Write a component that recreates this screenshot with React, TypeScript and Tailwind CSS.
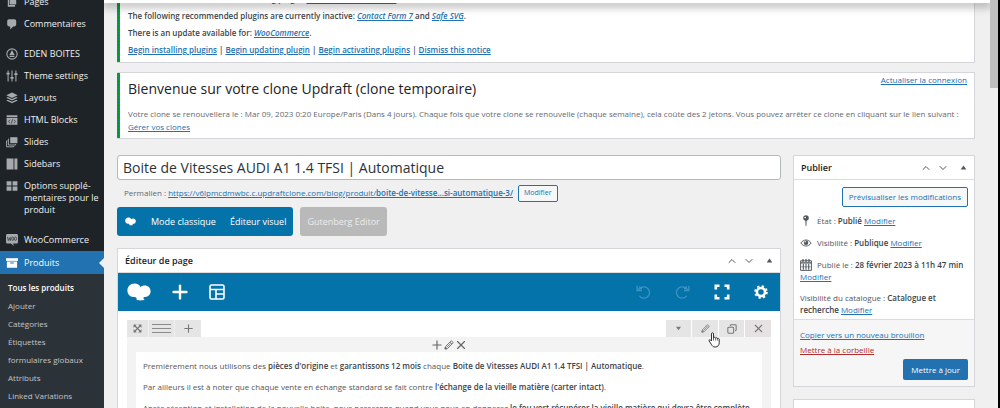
import React from 'react';
import { ChevronDown, ChevronUp, X, Plus, Copy } from 'lucide-react';

interface IconProps {
  className?: string;
}

const CommentIcon: React.FC<IconProps> = ({ className }) => (
  <svg viewBox="0 0 20 20" fill="currentColor" className={className}>
    <path d="M5 2h9a3 3 0 0 1 3 3v6a3 3 0 0 1-3 3h-2l-5 5v-5H5a3 3 0 0 1-3-3V5a3 3 0 0 1 3-3z" />
  </svg>
);

const PagesIcon: React.FC<IconProps> = ({ className }) => (
  <svg viewBox="0 0 20 20" fill="currentColor" className={className}>
    <path d="M6 1h11v13H6zM3 4h2v11h10v3H3z" />
  </svg>
);

const EdenIcon: React.FC<IconProps> = ({ className }) => (
  <svg viewBox="0 0 20 20" className={className}>
    <circle cx="10" cy="10" r="8.6" fill="none" stroke="currentColor" strokeWidth="1.8" />
    <path d="M10 3.5l4.6 8.4H5.4zM6 13.4h8v1.6H6z" fill="currentColor" />
  </svg>
);

const SlidersIcon: React.FC<IconProps> = ({ className }) => (
  <svg viewBox="0 0 20 20" fill="none" stroke="currentColor" strokeWidth="1.8" className={className}>
    <path d="M3.5 1v18M10 1v18M16.5 1v18" />
    <path d="M.8 6h5.4M7.3 13h5.4M13.8 7h5.4" strokeWidth="3" />
  </svg>
);

const LayersIcon: React.FC<IconProps> = ({ className }) => (
  <svg viewBox="0 0 20 20" fill="currentColor" className={className}>
    <path d="M10 1l9.5 4.5L10 10 .5 5.5z" />
    <path d="M3 8.2l7 3.4 7-3.4 2.5 1.3L10 14 .5 9.5zM3 12.8l7 3.4 7-3.4 2.5 1.3L10 18.7.5 14.1z" />
  </svg>
);

const CodeIcon: React.FC<IconProps> = ({ className }) => (
  <svg viewBox="0 0 20 20" className={className}>
    <path d="M1 2h18v3.5H1zM1 6.8h18V18H1z" fill="currentColor" />
    <path d="M7 9.5l-3 3 3 3M13 9.5l3 3-3 3M11 9l-2 7" fill="none" stroke="#1d2327" strokeWidth="1.2" />
  </svg>
);

const SlidesIcon: React.FC<IconProps> = ({ className }) => (
  <svg viewBox="0 0 20 20" className={className}>
    <path d="M7 2h12v10H7z" fill="currentColor" />
    <path d="M5 5H4v10h12v-1.5M2.5 8H1v10h12v-1.5" fill="none" stroke="currentColor" strokeWidth="1.6" />
  </svg>
);

const SidebarsIcon: React.FC<IconProps> = ({ className }) => (
  <svg viewBox="0 0 20 20" fill="currentColor" className={className}>
    <path d="M1 1h11.5v18H1zM14 1h5v18h-5z" />
  </svg>
);

const GridIcon: React.FC<IconProps> = ({ className }) => (
  <svg viewBox="0 0 20 20" fill="currentColor" className={className}>
    <path d="M1 2h8v7H1zM11 2h8v7h-8zM1 11h8v7H1zM11 11h8v7h-8z" />
  </svg>
);

const WooIcon: React.FC<IconProps> = ({ className }) => (
  <svg viewBox="0 1 24 19" preserveAspectRatio="none" className={className}>
    <path d="M2.5 1h19A2.5 2.5 0 0 1 24 3.5v10a2.500 2.500 0 0 1-2.500 2.500H14l2 4-6-4H2.500A2.500 2.500 0 0 1 0 13.500v-10A2.500 2.500 0 0 1 2.500 1z" fill="currentColor" />
    <path d="M3 5.500l1.500 6L7 7l1.500 4.500L10 5.500" fill="none" stroke="#3c434a" strokeWidth="1.500" />
    <ellipse cx="13.500" cy="8.500" rx="2" ry="2.800" fill="none" stroke="#3c434a" strokeWidth="1.500" />
    <ellipse cx="19" cy="8.500" rx="2" ry="2.800" fill="none" stroke="#3c434a" strokeWidth="1.500" />
  </svg>
);

const ArchiveIcon: React.FC<IconProps> = ({ className }) => (
  <svg viewBox="0 0 20 20" fill="currentColor" className={className}>
    <path d="M0 2h20v4.500H0z" />
    <path fillRule="evenodd" d="M1.500 7.500h17V18h-17zM7 9v2h6V9z" />
  </svg>
);

const BakeryLogo: React.FC<IconProps> = ({ className }) => (
  <svg viewBox="0 0 24 18" fill="currentColor" className={className}>
    <path d="M7.500.5c3 0 5 1.400 6 3.600 1.200-1 2.600-1.500 4.200-1.500 3.500 0 5.900 2.400 5.900 5.600 0 3.100-2.400 5.600-5.400 5.700-.6 0-1 .1-1.400.4-.7.600-.5 1.600.9 2.500-2.200.8-6.700.9-8.300 0 .5-.8.3-1.700-.4-2.300-.8-.5-1.700-.3-2.600-.4C2.800 13.800.4 11 .4 7.500.4 3.500 3.500.5 7.500.5z" />
  </svg>
);

const LayoutIcon: React.FC<IconProps> = ({ className }) => (
  <svg viewBox="0 0 16 16" fill="none" stroke="currentColor" strokeWidth="1.6" className={className}>
    <rect x="1" y="1" width="14" height="14" rx="1.5" />
    <path d="M1 5.5h14M7 5.5V15M7 10h8" />
  </svg>
);

const PencilIcon: React.FC<IconProps> = ({ className }) => (
  <svg viewBox="0 0 20 20" className={className}>
    <path d="M2 18l1-5L13.5 2.5a1.8 1.8 0 0 1 2.6 0l1.4 1.4a1.8 1.8 0 0 1 0 2.6L7 17z" fill="none" stroke="currentColor" strokeWidth="1.8" />
    <path d="M12 4l4 4M5 15l8-8M2 18l.6-3 2.4 2.4z" fill="currentColor" stroke="currentColor" strokeWidth="1.6" />
  </svg>
);

const UndoIcon: React.FC<IconProps> = ({ className }) => (
  <svg viewBox="0 0 20 20" fill="none" stroke="currentColor" strokeWidth="1.8" className={className}>
    <path d="M3 6.500C5 3.800 7.500 2.500 10.500 2.500a7.500 7.500 0 1 1-6 12" />
    <path d="M1.500 1v6.500H8M5 1.500v3.500h3" />
  </svg>
);

const ExpandIcon: React.FC<IconProps> = ({ className }) => (
  <svg viewBox="0 0 16 16" className={className} fill="none" stroke="currentColor" strokeWidth="2.6">
    <path d="M1.800 5.500V1.800h3.700M10.500 1.800h3.700v3.700M14.200 10.500v3.700h-3.700M5.500 14.200H1.800v-3.700" />
  </svg>
);

const GearIcon: React.FC<IconProps> = ({ className }) => (
  <svg viewBox="0 0 20 20" className={className}>
    <circle cx="10" cy="10" r="5.8" fill="none" stroke="currentColor" strokeWidth="3.6" />
    <circle cx="10" cy="10" r="8.4" fill="none" stroke="currentColor" strokeWidth="2.6" strokeDasharray="3.3 3.297" />
  </svg>
);

const MoveIcon: React.FC<IconProps> = ({ className }) => (
  <svg viewBox="0 0 12 12" className={className} stroke="currentColor" fill="currentColor">
    <path d="M2 2l8 8M10 2l-8 8" strokeWidth="1.5" />
    <path d="M1 1h3.500L1 4.500zM11 1v3.500L7.500 1zM11 11H7.500L11 7.500zM1 11V7.500L4.500 11z" strokeWidth=".5" />
  </svg>
);

const PinIcon: React.FC<IconProps> = ({ className }) => (
  <svg viewBox="0 0 20 20" className={className}>
    <circle cx="10" cy="5.5" r="5" fill="currentColor" />
    <path d="M8.800 9h2.400l-.5 11H9.300z" fill="currentColor" />
    <circle cx="8.500" cy="4.500" r="1.500" fill="#fff" />
  </svg>
);

const EyeIcon: React.FC<IconProps> = ({ className }) => (
  <svg viewBox="0 0 20 14" className={className}>
    <path d="M1 7c4.500-7 13.500-7 18 0-4.500 7-13.500 7-18 0z" fill="none" stroke="currentColor" strokeWidth="1.600" />
    <circle cx="10" cy="6.500" r="4" fill="currentColor" />
    <circle cx="8.600" cy="5" r="1.300" fill="#fff" />
  </svg>
);

const CalendarIcon: React.FC<IconProps> = ({ className }) => (
  <svg viewBox="0 0 20 20" className={className}>
    <path d="M1 3h18v16H1z" fill="none" stroke="currentColor" strokeWidth="1.600" />
    <path d="M1 6.500h18M5 0v5M10 0v5M15 0v5" stroke="currentColor" strokeWidth="2" />
    <path d="M5.500 8v10M10 8v10M14.500 8v10" stroke="currentColor" strokeWidth="1.800" />
    <path d="M2 13h16" stroke="currentColor" strokeWidth="1" />
  </svg>
);

const HandCursor: React.FC<IconProps> = ({ className }) => (
  <svg viewBox="0 0 24 32" className={className}>
    <path
      d="M7 3.500C7 .8 11 .8 11 3.500V12c.4-2 4-2 4.300.4.600-1.500 3.700-1.300 4 .9.900-1.100 3.200-.6 3.200 1.600V21c0 5-2.500 9-8 9-4.500 0-6-2-8-5.500L2.300 18c-1-2.200 1.400-3.500 3-1.800L7 18z"
      fill="#fff"
      stroke="#333"
      strokeWidth="2"
    />
    <path d="M11 12v5M15.300 12.500V17M19.300 13.500V17" stroke="#333" strokeWidth="1.500" />
  </svg>
);

const menuTop = [
  { label: 'Pages', Icon: PagesIcon },
  { label: 'Commentaires', Icon: CommentIcon },
];

const menuTheme = [
  { label: 'EDEN BOITES', Icon: EdenIcon },
  { label: 'Theme settings', Icon: SlidersIcon },
  { label: 'Layouts', Icon: LayersIcon },
  { label: 'HTML Blocks', Icon: CodeIcon },
  { label: 'Slides', Icon: SlidesIcon },
  { label: 'Sidebars', Icon: SidebarsIcon },
  { label: 'Options supplé-mentaires pour le produit', Icon: GridIcon },
];

const subMenu = ['Ajouter', 'Catégories', 'Étiquettes', 'formulaires globaux', 'Attributs', 'Linked Variations'];

interface MenuItemProps {
  label: string;
  Icon: React.FC<IconProps>;
}

const MenuItem: React.FC<MenuItemProps> = ({ label, Icon }) => (
  <li>
    <a href="#" className="flex items-start gap-[6px] pl-[6px] py-[5px] leading-[12px] text-[#f0f0f1]">
      <Icon className="w-[12px] h-[12px] shrink-0 text-[#a7aaad]" />
      <span>{label}</span>
    </a>
  </li>
);

const Sidebar: React.FC = () => (
  <nav className="w-[104px] shrink-0 bg-[#1d2327] text-[9px] flex flex-col overflow-hidden">
    <ul className="-mt-[9px]">
      {menuTop.map(item => <MenuItem key={item.label} {...item} />)}
    </ul>
    <ul className="mt-2">
      {menuTheme.map(item => <MenuItem key={item.label} {...item} />)}
    </ul>
    <ul className="mt-2">
      <MenuItem label="WooCommerce" Icon={WooIcon} />
      <li className="relative">
        <a href="#" className="flex items-center gap-[6px] pl-[6px] h-[23px] bg-[#2271b1] text-white">
          <ArchiveIcon className="w-[12px] h-[12px]" />
          Produits
        </a>
        <span className="absolute right-0 top-[7px] border-y-[5px] border-y-transparent border-r-[5px] border-r-[#f0f0f1]" />
      </li>
    </ul>
    <ul className="flex-1 bg-[#2c3338] pt-[5px] pl-2 text-[8px] leading-[18px] text-[#c3c4c7]">
      <li><a href="#" className="font-semibold text-white">Tous les produits</a></li>
      {subMenu.map(label => (
        <li key={label}><a href="#">{label}</a></li>
      ))}
    </ul>
  </nav>
);

interface LinkProps {
  children: React.ReactNode;
  className?: string;
}

const Link: React.FC<LinkProps> = ({ children, className = 'text-[#2271b1]' }) => (
  <a href="#" className={`underline ${className}`}>{children}</a>
);

const Strong: React.FC<LinkProps> = ({ children, className = 'text-[#3c434a]' }) => (
  <b className={`font-semibold ${className}`}>{children}</b>
);

const Notice: React.FC<LinkProps> = ({ children, className }) => (
  <section className={`flex bg-white border border-l-0 border-[#d5d6d9] ${className}`}>
    <div className="w-[3px] shrink-0 bg-[repeating-linear-gradient(0deg,#00a32a_0_2px,#1c7f6c_2px_3px)]" />
    <div className="flex-1 px-2">{children}</div>
  </section>
);

const PanelHeader: React.FC<{ title: string }> = ({ title }) => (
  <header className="flex items-center justify-between h-6 px-[7px] border-b border-[#dcdcde]">
    <h2 className="text-[9px] font-semibold text-[#1d2327]">{title}</h2>
    <div className="flex items-center gap-[5px] text-[#50575e]">
      <button aria-label="Monter"><ChevronUp className="w-[12px] h-[12px]" /></button>
      <button aria-label="Descendre"><ChevronDown className="w-[12px] h-[12px]" /></button>
      <button aria-label="Replier" className="pl-[6px]">
        <svg viewBox="0 0 10 10" className="w-[7px] h-[7px]" fill="currentColor"><path d="M5 2l4 6H1z" /></svg>
      </button>
    </div>
  </header>
);

const EditorPanel: React.FC = () => (
  <section className="mt-3 bg-white border border-[#d5d6d9]">
    <PanelHeader title="Éditeur de page" />
    <div className="flex items-center justify-between h-[38px] bg-[#0473aa] text-white pl-[9px] pr-3">
      <div className="flex items-center gap-[18px]">
        <BakeryLogo className="w-6 h-[18px]" />
        <button aria-label="Ajouter"><Plus className="w-[22px] h-[22px]" strokeWidth={2.6} /></button>
        <button aria-label="Modèles"><LayoutIcon className="w-[16px] h-[16px]" /></button>
      </div>
      <div className="flex items-center gap-6">
        <button aria-label="Annuler" className="text-[#3a93c0]"><UndoIcon className="w-[15px] h-[15px]" /></button>
        <button aria-label="Rétablir" className="text-[#3a93c0]"><UndoIcon className="w-[15px] h-[15px] -scale-x-100" /></button>
        <button aria-label="Plein écran"><ExpandIcon className="w-[16px] h-[16px]" /></button>
        <button aria-label="Réglages"><GearIcon className="w-[14px] h-[14px]" /></button>
      </div>
    </div>

    <div className="px-[9px] pt-[9px]">
      {/* Row controls */}
      <div className="flex justify-between text-[#777]">
        <div className="flex h-[17px] bg-[#e6e5e6]">
          <button aria-label="Déplacer" className="w-[22px] flex items-center justify-center border-r border-[#f0f0f0]">
            <MoveIcon className="w-[9px] h-[9px]" />
          </button>
          <button aria-label="Disposition" className="w-[26px] flex flex-col items-center justify-center gap-[3px] border-r border-[#f0f0f0]">
            <span className="w-[19px] h-px bg-[#8a8a8a]" />
            <span className="w-[19px] h-px bg-[#8a8a8a]" />
            <span className="w-[19px] h-px bg-[#8a8a8a]" />
          </button>
          <button aria-label="Ajouter une ligne" className="w-[26px] flex items-center justify-center">
            <Plus className="w-[13px] h-[13px]" strokeWidth={2} />
          </button>
        </div>
        <div className="flex h-[17px] gap-px">
          <button aria-label="Options" className="w-[25px] flex items-center justify-center bg-[#e6e5e6]">
            <svg viewBox="0 0 6 6" className="w-[5px] h-[5px]" fill="currentColor"><path d="M0 1h6L3 5z" /></svg>
          </button>
          <button aria-label="Modifier la ligne" className="relative w-[26px] flex items-center justify-center bg-[#e6e5e6]">
            <PencilIcon className="w-[9px] h-[9px]" />
            <HandCursor className="absolute z-10 left-[16px] top-[12px] w-[12px] h-[16px]" />
          </button>
          <button aria-label="Dupliquer" className="w-[25px] flex items-center justify-center bg-[#e6e5e6]">
            <Copy className="w-[10px] h-[10px] -scale-x-100" strokeWidth={2.5} />
          </button>
          <button aria-label="Supprimer" className="w-[26px] flex items-center justify-center bg-[#e6e2e3]">
            <X className="w-[13px] h-[13px]" />
          </button>
        </div>
      </div>

      <div className="bg-[#f3f3f3] px-[9px] pb-4">
        <div className="flex items-center justify-center h-[15px] text-[#666]">
          <button aria-label="Ajouter un élément"><Plus className="w-[14px] h-[14px]" /></button>
          <button aria-label="Modifier l'élément"><PencilIcon className="w-[10px] h-[10px]" /></button>
          <button aria-label="Supprimer l'élément"><X className="w-[14px] h-[14px]" /></button>
        </div>
        <div className="bg-white px-[7px] pt-2 pb-3 text-[8px] leading-[11px] text-[#555] space-y-[10px] whitespace-nowrap overflow-hidden">
          <p>
            Premièrement nous utilisons des <Strong>pièces d'origine</Strong> et <Strong>garantissons 12 mois</Strong> chaque{' '}
            <Strong>Boite de Vitesses AUDI A1 1.4 TFSI | Automatique</Strong>.
          </p>
          <p>
            Par ailleurs il est à noter que chaque vente en échange standard se fait contre <Strong>l'échange de la vieille matière (carter intact)</Strong>.
          </p>
          <p>
            Après réception et installation de la nouvelle boite, nous passerons quand vous nous en donnerez <Strong>le feu vert récupérer la vieille matière qui devra être complète</Strong>
          </p>
        </div>
      </div>
    </div>
  </section>
);

const PublishPanel: React.FC = () => (
  <section className="bg-white border border-[#d5d6d9] text-[8px] text-[#50575e]">
    <PanelHeader title="Publier" />
    <div className="px-[6px] pt-[7px] pb-px">
      <div className="flex justify-end">
        <button className="h-5 px-[6px] rounded-[2px] border border-[#2271b1] bg-[#f6f7f7] text-[#2271b1]">
          Prévisualiser les modifications
        </button>
      </div>
      <p className="flex items-center gap-[5px] mt-[7px] h-[13px]">
        <PinIcon className="w-[12px] h-[11px] shrink-0" />
        <span>État : <Strong>Publié</Strong> <Link>Modifier</Link></span>
      </p>
      <p className="flex items-center gap-[5px] mt-[9px] h-[13px]">
        <EyeIcon className="w-[12px] h-[8px] shrink-0" />
        <span>Visibilité : <Strong>Publique</Strong> <Link>Modifier</Link></span>
      </p>
      <p className="flex items-center gap-[5px] mt-[9px] h-[13px]">
        <CalendarIcon className="w-[12px] h-[12px] shrink-0" />
        <span>Publié le : <Strong>28 février 2023 à 11h 47 min</Strong></span>
      </p>
      <p className="leading-[12px]"><Link>Modifier</Link></p>
      <p className="mt-[9px] leading-[12px]">
        Visibilité du catalogue : <Strong>Catalogue et recherche</Strong> <Link>Modifier</Link>
      </p>
    </div>
    <footer className="mt-[2px] bg-[#f6f6f7] border-t border-[#dcdcde] px-[6px] pt-[7px] pb-[6px]">
      <p className="leading-[15px]"><Link>Copier vers un nouveau brouillon</Link></p>
      <p className="leading-[15px]"><Link className="text-[#b32d2e]">Mettre à la corbeille</Link></p>
      <div className="flex justify-end mt-[2px]">
        <button className="h-[21px] px-2 rounded-[2px] bg-[#2271b1] text-white">Mettre à jour</button>
      </div>
    </footer>
  </section>
);

const App: React.FC = () => (
  <div className="relative flex h-screen overflow-hidden bg-[#f0f0f1] font-['Open_Sans','Noto_Sans',sans-serif] text-[#3c434a]">
    <Sidebar />

    <main className="relative flex-1 min-w-0 pl-[13px] pr-[15px] overflow-hidden">
      <div className="absolute inset-x-0 top-0 z-10 h-[3px] bg-white shadow-[0_2px_9px_2px_rgba(0,0,0,0.3)]" />

      <Notice className="-mt-[11px]">
        <div className="text-[8px] leading-[17px] pb-1 font-semibold">
          <p>This theme recommends the following plugin: <i><Link>Slider Revolution Builder</Link></i></p>
          <p>The following recommended plugins are currently inactive: <i><Link>Contact Form 7</Link></i> and <i><Link>Safe SVG</Link></i>.</p>
          <p>There is an update available for: <i><Link>WooCommerce</Link></i>.</p>
          <p>
            <Link>Begin installing plugins</Link> | <Link>Begin updating plugin</Link> | <Link>Begin activating plugins</Link> | <Link>Dismiss this notice</Link>
          </p>
        </div>
      </Notice>

      <Notice className="mt-[9px]">
        <div className="relative pt-[6px] pb-[5px]">
          <h1 className="text-[14px] leading-[20px] text-[#1d2327]">Bienvenue sur votre clone Updraft (clone temporaire)</h1>
          <span className="absolute -right-px top-0 text-[8px] leading-[13px]"><Link>Actualiser la connexion</Link></span>
          <p className="mt-2 text-[8px] leading-[13px] text-[#646970]">
            Votre clone se renouvellera le : Mar 09, 2023 0:20 Europe/Paris (Dans 4 jours). Chaque fois que votre clone se renouvelle (chaque semaine), cela coûte des 2 jetons. Vous pouvez arrêter ce clone en cliquant sur le lien suivant :{' '}
            <Link>Gérer vos clones</Link>
          </p>
        </div>
      </Notice>

      <div className="flex items-start gap-3 mt-4">
        <div className="flex-1 min-w-0">
          <input
            aria-label="Titre du produit"
            defaultValue="Boite de Vitesses AUDI A1 1.4 TFSI | Automatique"
            className="block w-full h-[25px] px-[5px] bg-white border border-[#b5b8bc] rounded-[3px] text-[14px] text-[#2c3338]"
          />
          <div className="flex items-center gap-[5px] mt-1 pl-[7px] h-[18px] text-[8px] text-[#646970]">
            <span>Permalien : <Link>https://v6lpmcdmwbc.c.updraftclone.com/blog/produit/<b className="font-semibold">boite-de-vitesse...si-automatique-3/</b></Link></span>
            <button className="h-[17px] px-[5px] rounded-[2px] border border-[#2271b1] bg-[#f6f7f7] text-[7px] text-[#2271b1]">Modifier</button>
          </div>
          <div className="flex gap-[7px] mt-[5px] text-[9px] text-white">
            <div className="flex items-center h-[29px] pl-2 rounded-[3px] bg-[#0473aa]">
              <BakeryLogo className="w-[11px] h-[9px]" />
              <button className="pl-[15px] pr-[7px]">Mode classique</button>
              <button className="px-[7px]">Éditeur visuel</button>
            </div>
            <button className="h-[29px] px-[7px] rounded-[3px] bg-[#b9b9ba] text-[#ececec]">Gutenberg Editor</button>
          </div>
          <EditorPanel />
        </div>

        <aside className="w-[182px] shrink-0">
          <PublishPanel />
          <section className="mt-3 h-10 bg-white border border-[#d5d6d9]" />
        </aside>
      </div>
    </main>

    {/* Scrollbar */}
    <div className="w-2 shrink-0">
      <div className="h-[88px] bg-[#c1c0c1]" />
    </div>
    <div className="w-[2px] shrink-0 bg-black" />
  </div>
);

export default App;
